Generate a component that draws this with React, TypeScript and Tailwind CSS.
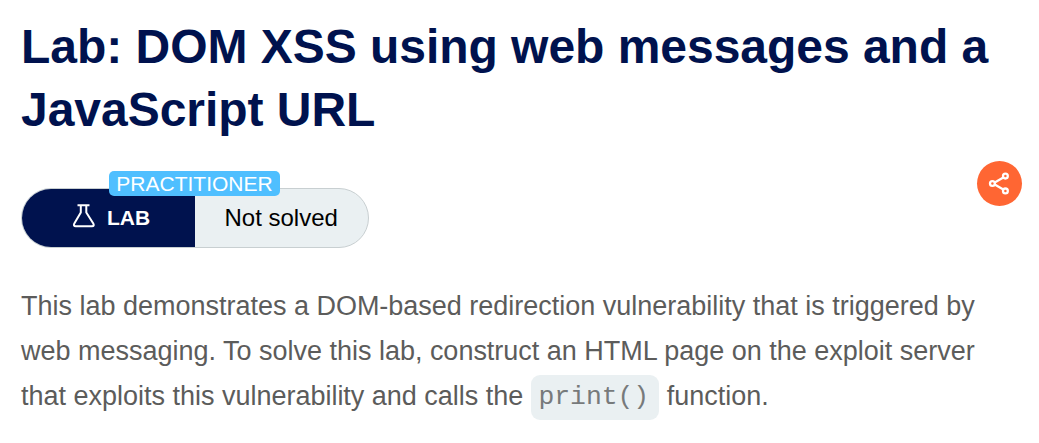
export default function App() {
  return (
    <main className="h-[443px] w-[1039px] overflow-hidden bg-white pl-[21px] font-['Liberation_Sans',Arial,sans-serif]">
      <h1 className="pt-[15px] text-[48px] leading-[63px] font-bold tracking-[-0.03px] text-[#00124e]">
        <span className="block whitespace-nowrap">Lab: DOM XSS using web messages and a</span>
        <span className="block whitespace-nowrap">JavaScript URL</span>
      </h1>
      <div className="mt-[20px] flex h-[87px] justify-between pr-[17px]">
        <div className="relative mt-[27px] flex h-[60px] w-[348px] rounded-full border border-[#c8cfd1] bg-[#eaf0f2]">
          <div className="flex w-[173px] items-center rounded-l-full bg-[#00124e] pl-[50px] text-white">
            <svg className="h-[30px] w-[24px]" viewBox="0 0 24 30" fill="none" stroke="currentColor" strokeWidth="2" strokeLinejoin="round">
              <path d="M5.5 2.3h12M8.8 2.3v7.2L2.3 20.5Q1 23.2 3.8 23.2H20Q22.7 23.2 21.3 20.5L14.3 9.5V2.3" />
            </svg>
            <span className="ml-[11px] text-[21px] font-bold">LAB</span>
          </div>
          <div className="flex items-center pl-[29.5px] text-[24px] text-black">Not solved</div>
          <div className="absolute top-[-18px] left-[87px] flex h-[25px] w-[171px] items-center justify-center rounded-[5px] bg-[#4fbfff] text-[21px] text-white">PRACTITIONER</div>
        </div>
        <button aria-label="Share" className="flex size-[45px] items-center justify-center rounded-full bg-[#ff6633] text-white">
          <svg className="size-[24px]" viewBox="0 0 24 24" fill="none" stroke="currentColor" strokeWidth="2.3">
            <path d="M5 11.5 17.9 4.1M5 11.5 17.9 18.9" />
            <circle cx="4.4" cy="11.5" r="2.4" fill="#ff6633" />
            <circle cx="17.4" cy="4.1" r="2.4" fill="#ff6633" />
            <circle cx="17.4" cy="18.9" r="2.4" fill="#ff6633" />
          </svg>
        </button>
      </div>
      <p className="mt-[36px] text-[27px] leading-[45px] tracking-[-0.01px] text-[#5c5c5b]">
        <span className="block whitespace-nowrap">This lab demonstrates a DOM-based redirection vulnerability that is triggered by</span>
        <span className="block whitespace-nowrap">web messaging. To solve this lab, construct an HTML page on the exploit server</span>
        <span className="flex items-center whitespace-nowrap">
          that exploits this vulnerability and calls the
          <code className="relative top-px mr-[8px] ml-[7.5px] flex h-[45px] w-[128px] items-center justify-center rounded-[9px] bg-[#eaf0f2] pr-[2px] font-['Liberation_Mono','Courier_New',monospace] text-[26.4px] text-[#777a7b]">print()</code>
          function.
        </span>
      </p>
    </main>
  );
}
